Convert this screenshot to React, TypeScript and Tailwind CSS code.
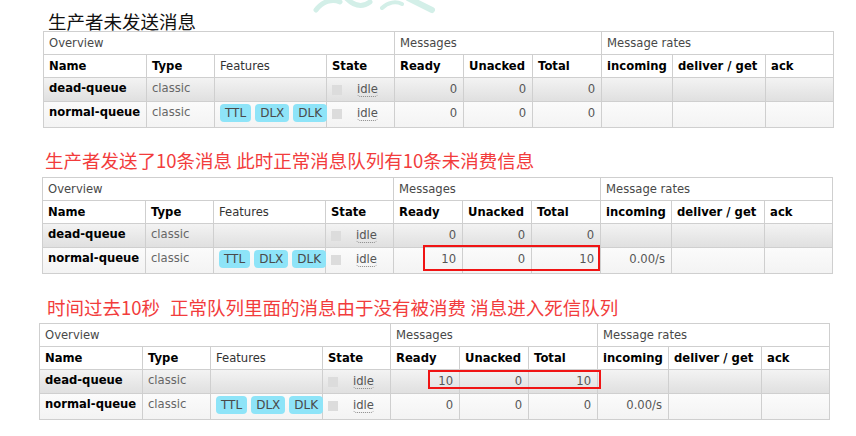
import React from "react";

type Row = {
  name: string;
  features: boolean;
  ready: string;
  unacked: string;
  total: string;
  incoming: string;
};

type Box = { top: number; left: number; width: number; height: number };

const cols = [103, 68, 112, 68, 69, 69, 69, 71, 93, 68];

function Idle() {
  return (
    <span className="ml-[15px] rounded-b-[4px] border-b border-dotted border-[#888] leading-[14px] text-[#555]">
      idle
    </span>
  );
}

function Badge({ label }: { label: string }) {
  return (
    <span className="inline-block h-[18px] rounded-[4px] bg-[#8ee4f8] px-[5px] text-[12px] leading-[18px] text-[#4a4a4a]">
      {label}
    </span>
  );
}

function QueueTable({ rows, box, ml }: { rows: Row[]; box?: Box; ml: string }) {
  const cell = "border border-[#cfcfcf] px-[5px] align-top whitespace-nowrap overflow-visible";
  const num = `${cell} text-right pr-[6px] text-[#555]`;
  return (
    <div className={`relative w-[791px] ${ml}`}>
      <table className="w-[791px] table-fixed border-collapse text-[11.6px] leading-[15px] text-[#333]">
        <colgroup>
          {cols.map((w, i) => (
            <col key={i} style={{ width: w }} />
          ))}
        </colgroup>
        <tbody>
          <tr className="h-[23px] bg-white text-[#484848]">
            <td colSpan={4} className={`${cell} pt-[4px]`}>Overview</td>
            <td colSpan={3} className={`${cell} pt-[4px]`}>Messages</td>
            <td colSpan={3} className={`${cell} pt-[4px]`}>Message rates</td>
          </tr>
          <tr className="h-[23px] bg-white font-bold text-black">
            <td className={`${cell} pt-[4px]`}>Name</td>
            <td className={`${cell} pt-[4px]`}>Type</td>
            <td className={`${cell} pt-[4px] font-normal text-[#333]`}>Features</td>
            <td className={`${cell} pt-[4px]`}>State</td>
            <td className={`${cell} pt-[4px]`}>Ready</td>
            <td className={`${cell} pt-[4px]`}>Unacked</td>
            <td className={`${cell} pt-[4px]`}>Total</td>
            <td className={`${cell} pt-[4px]`}>incoming</td>
            <td className={`${cell} pt-[4px]`}>deliver / get</td>
            <td className={`${cell} pt-[4px]`}>ack</td>
          </tr>
          {rows.map((r, i) => (
            <tr
              key={r.name}
              className={
                i === 0
                  ? "h-[24px] bg-gradient-to-b from-[#f3f3f3] to-[#dfdfdf]"
                  : "h-[26px] bg-gradient-to-b from-[#fbfbfb] to-[#f3f3f3]"
              }
            >
              <td className={`${cell} pt-[3px] font-bold text-black`}>{r.name}</td>
              <td className={`${cell} pt-[3px] text-[#666]`}>classic</td>
              <td className={`${cell} pt-[2px] pl-[5px]`}>
                {r.features && (
                  <div className="flex gap-[4px]">
                    <Badge label="TTL" />
                    <Badge label="DLX" />
                    <Badge label="DLK" />
                  </div>
                )}
              </td>
              <td className={`${cell} pt-[4px]`}>
                <div className="flex items-center">
                  <span className="inline-block h-[10px] w-[10px] bg-[#dcdcdc]" />
                  <Idle />
                </div>
              </td>
              <td className={`${num} pt-[4px]`}>{r.ready}</td>
              <td className={`${num} pt-[4px]`}>{r.unacked}</td>
              <td className={`${num} pt-[4px]`}>{r.total}</td>
              <td className={`${num} pt-[4px]`}>{r.incoming}</td>
              <td className={cell} />
              <td className={cell} />
            </tr>
          ))}
        </tbody>
      </table>
      {box && (
        <div
          className="absolute border-2 border-[#f01414]"
          style={{ top: box.top, left: box.left, width: box.width, height: box.height }}
        />
      )}
    </div>
  );
}

export default function App() {
  const before: Row[] = [
    { name: "dead-queue", features: false, ready: "0", unacked: "0", total: "0", incoming: "" },
    { name: "normal-queue", features: true, ready: "0", unacked: "0", total: "0", incoming: "" },
  ];
  const sent: Row[] = [
    { name: "dead-queue", features: false, ready: "0", unacked: "0", total: "0", incoming: "" },
    { name: "normal-queue", features: true, ready: "10", unacked: "0", total: "10", incoming: "0.00/s" },
  ];
  const expired: Row[] = [
    { name: "dead-queue", features: false, ready: "10", unacked: "0", total: "10", incoming: "" },
    { name: "normal-queue", features: true, ready: "0", unacked: "0", total: "0", incoming: "0.00/s" },
  ];

  const title = "text-[18.5px] leading-[20px] [font-family:'Noto_Sans_CJK_SC','Noto_Sans',sans-serif]";

  return (
    <div className="relative h-[436px] w-[856px] overflow-hidden bg-white [font-family:'DejaVu_Sans','Noto_Sans_CJK_SC',sans-serif]">
      <svg className="absolute left-[300px] top-0" width="150" height="14" viewBox="0 0 150 14" fill="none">
        <path d="M16 10 C22 2 32 -2 40 2" stroke="#d3efe8" strokeWidth="5" strokeLinecap="round" />
        <path d="M46 -2 C54 6 62 8 70 2" stroke="#d3efe8" strokeWidth="5" strokeLinecap="round" />
        <path d="M82 8 C88 2 96 1 102 4" stroke="#d3efe8" strokeWidth="4" strokeLinecap="round" />
        <path d="M108 -2 L132 10" stroke="#d3efe8" strokeWidth="6" strokeLinecap="round" />
      </svg>
      <div className="flex flex-col">
        <div className={`${title} ml-[48px] pt-[11px] text-[#111]`}>生产者未发送消息</div>
        <QueueTable rows={before} ml="ml-[43px]" />
        <div className={`${title} ml-[45px] pt-[22px] pb-[7px] text-[#f23c3c]`}>
          生产者发送了10条消息 此时正常消息队列有10条未消费信息
        </div>
        <QueueTable rows={sent} ml="ml-[42px]" box={{ top: 68, left: 381, width: 177, height: 26 }} />
        <div className={`${title} ml-[47px] pt-[23px] pb-[6px] text-[#f23c3c]`}>
          时间过去10秒<span className="ml-[10px]">正常队列里面的消息由于没有被消费 消息进入死信队列</span>
        </div>
        <QueueTable rows={expired} ml="ml-[39px]" box={{ top: 47, left: 389, width: 173, height: 19 }} />
      </div>
    </div>
  );
}
